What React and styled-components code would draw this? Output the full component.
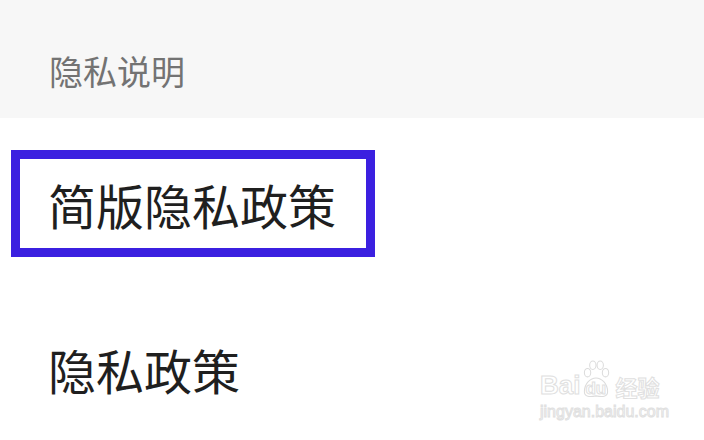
import React from "react";
import styled, { createGlobalStyle } from "styled-components";

const GlobalStyle = createGlobalStyle`
  html, body {
    margin: 0;
    padding: 0;
    background: #ffffff;
  }
  body {
    font-family: "Noto Sans CJK SC", "Noto Sans", sans-serif;
  }
`;

const Page = styled.div`
  position: relative;
  width: 704px;
  height: 440px;
  overflow: hidden;
  background: #ffffff;
`;

const SectionHeader = styled.div`
  height: 118px;
  box-sizing: border-box;
  padding: 54px 0 0 49px;
  background: #f7f7f7;
  color: #737373;
  font-size: 34px;
  line-height: 1;
`;

const List = styled.div`
  display: flex;
  flex-direction: column;
  gap: 58px;
  padding-top: 32px;
`;

const Row = styled.div`
  display: flex;
  align-items: center;
  box-sizing: border-box;
  height: 107px;
  width: ${(props) => (props.highlighted ? "364px" : "auto")};
  margin-left: 11px;
  padding-left: ${(props) => (props.highlighted ? "28px" : "37px")};
  border: ${(props) => (props.highlighted ? "9px solid #3b20e0" : "none")};
  color: #1f1f1f;
  font-size: 48px;
  line-height: 1;
`;

const Watermark = styled.div`
  position: absolute;
  left: 540px;
  top: 360px;
  display: flex;
  flex-direction: column;
  align-items: flex-start;
  color: #ffffff;
  -webkit-text-stroke: 1px #e0e0e0;
  font-family: "Liberation Sans", Arial, sans-serif;
  pointer-events: none;
`;

const BrandLine = styled.div`
  display: flex;
  align-items: flex-end;
  gap: 1px;
`;

const Bai = styled.span`
  font-size: 26px;
  font-weight: bold;
  line-height: 1;
`;

const Paw = styled.div`
  position: relative;
  width: 30px;
  height: 38px;
`;

const Du = styled.span`
  position: absolute;
  left: 4px;
  bottom: 1px;
  font-size: 17px;
  font-weight: bold;
  line-height: 1;
`;

const Jingyan = styled.span`
  margin-left: 3px;
  margin-bottom: 1px;
  font-family: "Noto Sans CJK SC", sans-serif;
  font-size: 22px;
  font-weight: bold;
  line-height: 1;
`;

const Url = styled.div`
  margin-top: 6px;
  font-size: 16px;
  line-height: 1;
`;

const PawIcon = () => (
  <svg width="30" height="38" viewBox="0 0 28 36" fill="none" stroke="#dcdcdc" strokeWidth="1">
    <ellipse cx="6" cy="12" rx="3" ry="4" />
    <ellipse cx="11" cy="5" rx="3" ry="4" />
    <ellipse cx="18" cy="5" rx="3" ry="4" />
    <ellipse cx="23" cy="12" rx="3" ry="4" />
    <path d="M3 30 C3 22 9 17 14 17 C19 17 25 22 25 30 C25 35 20 35 14 34 C8 35 3 35 3 30 Z" />
  </svg>
);

export default function App() {
  return (
    <>
      <GlobalStyle />
      <Page>
        <SectionHeader>隐私说明</SectionHeader>
        <List>
          <Row highlighted>简版隐私政策</Row>
          <Row>隐私政策</Row>
        </List>
        <Watermark>
          <BrandLine>
            <Bai>Bai</Bai>
            <Paw>
              <PawIcon />
              <Du>du</Du>
            </Paw>
            <Jingyan>经验</Jingyan>
          </BrandLine>
          <Url>jingyan.baidu.com</Url>
        </Watermark>
      </Page>
    </>
  );
}
